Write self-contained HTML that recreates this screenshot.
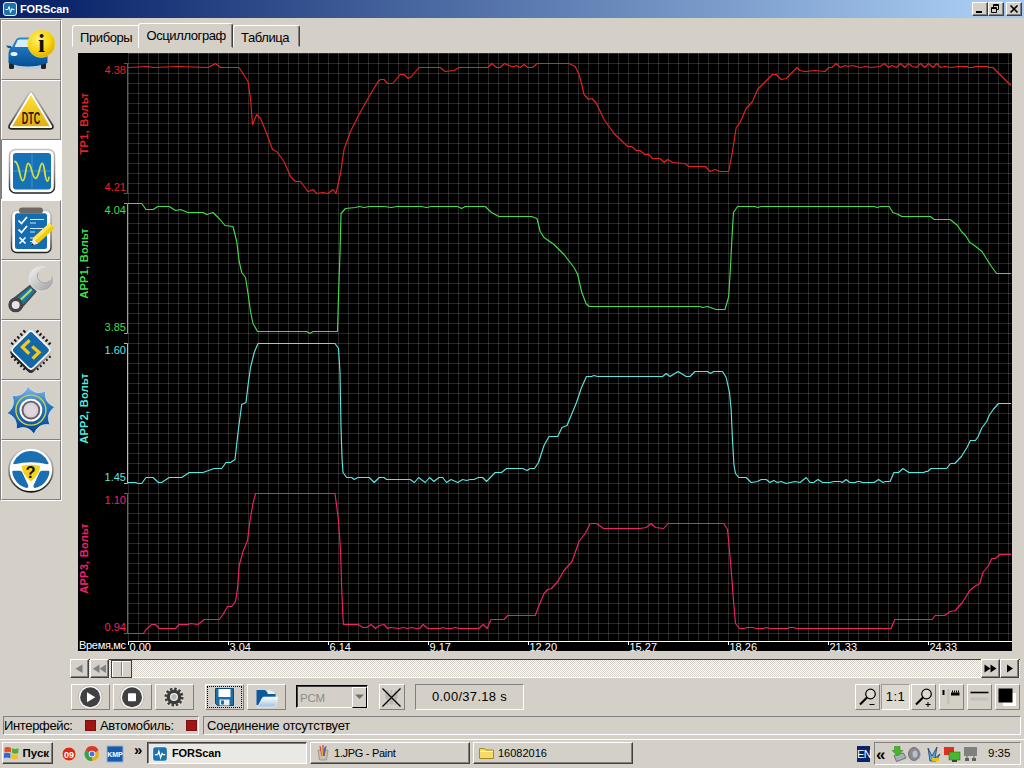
<!DOCTYPE html>
<html><head><meta charset="utf-8"><title>FORScan</title><style>
*{box-sizing:border-box;margin:0;padding:0}
html,body{width:1024px;height:768px;overflow:hidden;background:#d4d0c8;font-family:"Liberation Sans","DejaVu Sans",sans-serif;font-size:11px;color:#000}
.abs{position:absolute}
#title{left:0;top:0;width:1024px;height:18px;background:linear-gradient(90deg,#0a246a 0%,#0a246a 5%,#a6caf0 95%,#a6caf0 100%)}
#title .t{position:absolute;left:20px;top:2px;color:#fff;font-weight:bold;font-size:11px;line-height:14px;letter-spacing:-0.1px}
.wb{position:absolute;top:2px;width:16px;height:14px;background:#d4d0c8;border:1px solid;border-color:#fff #404040 #404040 #fff;box-shadow:inset -1px -1px 0 #808080}
.raised{background:#d4d0c8;border:1px solid;border-color:#fff #808080 #808080 #fff}
.sunken{border:1px solid;border-color:#808080 #fff #fff #808080}
.sb{position:absolute;left:1px;width:60px;height:60px;border:1px solid;border-color:#fff #808080 #808080 #fff;background:#d4d0c8}
.sb.sel{background:#fff;border-color:#fff}
.sb svg{position:absolute;left:0;top:0}
.tab{position:absolute;font-size:13px;letter-spacing:-0.4px;line-height:16px;white-space:nowrap;border:1px solid;border-color:#fff #404040 transparent #fff;border-radius:3px 3px 0 0;box-shadow:inset -1px 0 0 #808080}
#chart{left:78px;top:53px;width:934px;height:598px;background:#000;overflow:hidden}
#grid{position:absolute;left:50px;top:0;width:884px;height:589px;
 background-image:linear-gradient(90deg,transparent 0,transparent 9px,rgba(255,255,255,0.155) 9px,rgba(255,255,255,0.155) 10px),linear-gradient(180deg,transparent 0,transparent 9px,rgba(255,255,255,0.155) 9px,rgba(255,255,255,0.155) 10px);
 background-size:10px 10px,10px 10px;background-position:1px 0,0 1px}
.tb{position:absolute;top:684px;height:26px}
.tk{position:absolute;top:742px;height:22px;font-size:11px;line-height:20px;white-space:nowrap}
</style></head><body>
<div id="title" class="abs"><div class="t">FORScan</div></div>
<svg class="abs" style="left:3px;top:2px" width="14" height="14" viewBox="0 0 14 14"><rect x="0.500" y="0.500" width="13" height="13" rx="2.500" fill="#1d72ac" stroke="#e8f0f8" stroke-width="1"/><path d="M2.500,7.500H5L6,4.500L7.500,10.500L8.800,6.500L9.500,7.500H11.500" fill="none" stroke="#fff" stroke-width="1"/></svg>
<div class="wb" style="left:972px"><div class="abs" style="left:3px;top:8px;width:6px;height:2px;background:#000"></div></div>
<div class="wb" style="left:988px"><svg class="abs" style="left:0;top:0" width="14" height="12"><path d="M4.500,1.500H9.500V6.500H4.500Z M4.500,2.500H9.500" fill="none" stroke="#000" stroke-width="1"/><rect x="2" y="4" width="6" height="6" fill="#d4d0c8"/><path d="M2.500,4.500H7.500V9.500H2.500Z M2.500,5.500H7.500" fill="none" stroke="#000" stroke-width="1"/></svg></div>
<div class="wb" style="left:1006px"><svg class="abs" style="left:0;top:0" width="14" height="12"><path d="M3.500,2.500L10.500,9.500M10.500,2.500L3.500,9.500" stroke="#000" stroke-width="1.700"/></svg></div>

<svg width="0" height="0" style="position:absolute"><defs>
<linearGradient id="gBlue" x1="0" y1="0" x2="0" y2="1"><stop offset="0" stop-color="#2a8ad2"/><stop offset="1" stop-color="#054e94"/></linearGradient>
<radialGradient id="gYel" cx="0.4" cy="0.35" r="0.7"><stop offset="0" stop-color="#fff27a"/><stop offset="0.6" stop-color="#f6d40e"/><stop offset="1" stop-color="#d8a800"/></radialGradient>
<linearGradient id="gYel2" x1="0" y1="0" x2="0" y2="1"><stop offset="0" stop-color="#ffe23a"/><stop offset="1" stop-color="#e0b010"/></linearGradient>
<linearGradient id="gSil" x1="0" y1="0" x2="1" y2="1"><stop offset="0" stop-color="#f4f4f4"/><stop offset="1" stop-color="#9a9a9a"/></linearGradient>
<linearGradient id="gGear" x1="0" y1="0" x2="0" y2="1"><stop offset="0" stop-color="#8ab8e8"/><stop offset="0.4" stop-color="#2a78bc"/><stop offset="1" stop-color="#06408c"/></linearGradient>
<linearGradient id="gFrame" x1="0" y1="0" x2="0" y2="1"><stop offset="0" stop-color="#c4c4c4"/><stop offset="0.6" stop-color="#808080"/><stop offset="1" stop-color="#202020"/></linearGradient>
<linearGradient id="gFrame2" x1="0" y1="0" x2="0" y2="1"><stop offset="0" stop-color="#d0d0d0"/><stop offset="0.5" stop-color="#909090"/><stop offset="1" stop-color="#101010"/></linearGradient>
</defs></svg>
<div class="abs" style="left:0;top:19px;width:62px;height:482px;border:1px solid;border-color:#808080 #fff #fff #808080"></div>
<!-- 1 car info -->
<div class="sb" style="top:20px"><svg width="58" height="58" viewBox="0 1 58 58">
<ellipse cx="25" cy="47" rx="19" ry="2.5" fill="#b8c8d8" opacity="0.7"/>
<rect x="7" y="42" width="5" height="7" rx="1.5" fill="#222"/><rect x="39" y="42" width="5" height="7" rx="1.5" fill="#222"/>
<path d="M6.500,43 V34 Q6.500,29 10,27 L14,19.500 Q15,17.500 18,17.500 H33 Q36,17.500 37,19.500 L41,27 Q45.500,29 45.500,34 V43 Q36,46.500 26,46.500 Q16,46.500 6.500,43Z" fill="url(#gBlue)"/>
<path d="M12.5,27 L15.5,20.5 Q16,19.5 18,19.5 H33 Q35,19.500 35.500,20.5 L38.5,27Z" fill="#d8ecfa"/>
<path d="M4,25.500 l5,0.500 l1,2.500 l-4,-0.500z" fill="#0d5a9a"/>
<ellipse cx="12" cy="34" rx="3.500" ry="2" fill="#e8f4ff"/>
<circle cx="39.4" cy="23.8" r="13.7" fill="url(#gYel)" stroke="#f4e060" stroke-width="0.6"/>
<text x="39.6" y="31.5" font-family="Liberation Serif, DejaVu Serif, serif" font-weight="bold" font-size="25" text-anchor="middle" fill="#111">i</text>
</svg></div>
<!-- 2 DTC -->
<div class="sb" style="top:80px"><svg width="58" height="58" viewBox="0 1 58 58">
<path d="M27.2,13 Q29,10.400 30.800,13 L50.600,45.200 Q52,48.800 48.500,48.800 H9.500 Q6,48.800 7.400,45.200Z" fill="#fff" stroke="url(#gFrame)" stroke-width="1.800" stroke-linejoin="round"/>
<path d="M29,15 L47.800,46.200 H10.200Z" fill="url(#gYel2)"/>
<text x="29" y="43.800" font-family="Liberation Sans, sans-serif" font-weight="bold" font-size="16.500" text-anchor="middle" fill="#2c2008" textLength="18.500" lengthAdjust="spacingAndGlyphs">DTC</text>
</svg></div>
<!-- 3 oscilloscope (selected) -->
<div class="sb sel" style="top:140px"><svg width="58" height="58" viewBox="0 1 58 58">
<rect x="7.500" y="9.500" width="45" height="43.500" rx="6" fill="#fff" stroke="url(#gFrame)" stroke-width="1.5"/>
<rect x="11" y="13" width="38" height="36.500" rx="3" fill="#1672b6"/>
<path d="M30,13V49.500M11,31H49" stroke="#4a9acc" stroke-width="0.8"/>
<path d="M12.9,21.5 C17.5,21.5 17.5,40.6 20.7,40.6 C24,40.6 23.5,23.4 26.2,23.4 C29.5,23.4 30,38.3 33.6,38.3 C37.2,38.3 37.5,23.4 40.2,23.4 C43,23.4 42.5,41 45.3,41 C46.3,41 46.7,39 46.9,37.5" fill="none" stroke="#d8e040" stroke-width="1.8" stroke-linecap="round"/>
</svg></div>
<!-- 4 clipboard -->
<div class="sb" style="top:200px"><svg width="58" height="58" viewBox="0 1 58 58">
<rect x="9.5" y="10.5" width="39.5" height="42" rx="5" fill="#fff" stroke="url(#gFrame)" stroke-width="1.5"/>
<rect x="13" y="13.3" width="32" height="35.6" rx="2.5" fill="#166cb0"/>
<rect x="17" y="7.4" width="24" height="6" rx="3" fill="#6e6862"/>
<path d="M16.5,20.5 l3,3 l5.500,-6.500 M16.5,29.500 l3,3 l5.500,-6.500 M17.500,37.500 l6,6 M23.500,37.500 l-6,6" fill="none" stroke="#fff" stroke-width="1.700"/>
<path d="M28,19.500H42M28,23H34M28,28.500H41M28,32H33M28,38H33M28,41.500H31" stroke="#d0e8f8" stroke-width="1"/>
<g transform="translate(-1.500,-2.500)">
<path d="M49,25.500 L54,31 L37.500,46 L32.500,40.500Z" fill="#f4cc0c"/>
<path d="M49,25.500 L51.300,28 L34.800,43 L32.500,40.500Z" fill="#ffe858"/>
<path d="M32.500,40.500 L37.500,46 L30.500,48.500Z" fill="#f4e8e4"/><path d="M31.500,45.500 L33.500,47.400 L30.500,48.500Z" fill="#111"/>
</g>
</svg></div>
<!-- 5 wrench -->
<div class="sb" style="top:260px"><svg width="58" height="58" viewBox="0 1 58 58">
<path d="M9.6,40.5 L28.3,25.7 L33.7,31.5 L17.8,49.3Z" fill="#1878b0" stroke="#454a4c" stroke-width="1.8" stroke-linejoin="round"/>
<path d="M18.7,39.8 L29.7,29.3" stroke="#c4e044" stroke-width="2"/>
<circle cx="13.7" cy="44.9" r="5.7" fill="#ece0e2" stroke="#454545" stroke-width="3.4"/>
<circle cx="39.5" cy="18.8" r="12.4" fill="url(#gSil)" stroke="#e4e4e4" stroke-width="0.8"/>
<path d="M42.6,15.8 L53.6,4.8" stroke="#d4d0c8" stroke-width="10.5"/>
<circle cx="42.6" cy="15.8" r="7.2" fill="#d4d0c8"/>
<path d="M36.2,12.6 A7.2,7.2 0 0 0 47.5,21" fill="none" stroke="#a4a4a4" stroke-width="1"/>
</svg></div>
<!-- 6 chip -->
<div class="sb" style="top:320px"><svg width="58" height="58" viewBox="0 1 58 58">
<g transform="translate(28.9,30.1) rotate(45)">
<g stroke="#111" stroke-width="3" stroke-dasharray="1.8 2.5">
<path d="M-9.5,-17.8H9.6"/><path d="M-9.5,17.8H9.6"/><path d="M-17.8,-9.5V9.6"/><path d="M17.8,-9.5V9.6"/></g>
</g>
<g transform="translate(28.9,32.4) rotate(45)"><rect x="-15.6" y="-15.6" width="31.2" height="31.2" rx="4" fill="url(#gFrame)"/></g>
<g transform="translate(28.9,30.1) rotate(45)">
<rect x="-15" y="-15" width="30" height="30" rx="4" fill="#fff"/>
<rect x="-13.5" y="-13.5" width="27" height="27" rx="3" fill="#1468a8"/>
</g>
<path d="M27.6,20.3 L20.4,27.1 L27.2,33.8" fill="none" stroke="#f4c81c" stroke-width="3.3"/>
<path d="M30.2,26.6 L37,32.3 L30.6,38.7" fill="none" stroke="#f4c81c" stroke-width="3.3"/>
</svg></div>
<!-- 7 gear -->
<div class="sb" style="top:380px"><svg width="58" height="58" viewBox="0 1 58 58">
<g transform="translate(28.9,30.1)">
<path d="M-3.1,-23.8Q3.8,-14.3 14.6,-19.0Q12.8,-7.4 23.8,-3.1Q14.3,3.8 19.0,14.6Q7.4,12.8 3.1,23.8Q-3.8,14.3 -14.6,19.0Q-12.8,7.4 -23.8,3.1Q-14.3,-3.8 -19.0,-14.6Q-7.4,-12.8 -3.1,-23.8Z" fill="url(#gGear)" stroke="#cfe0f4" stroke-width="0.8" stroke-linejoin="round"/>
<circle r="15" fill="none" stroke="#c8d444" stroke-width="1.4"/>
<circle r="10.6" fill="#e8e8f0" stroke="#fff" stroke-width="1.6"/>
<circle r="8.4" fill="#d8d0d4" stroke="#6a5c64" stroke-width="1.8"/>
<circle r="5.4" fill="#e0d8e0"/>
</g></svg></div>
<!-- 8 steering wheel help -->
<div class="sb" style="top:440px"><svg width="58" height="58" viewBox="0 1 58 58">
<g transform="translate(28.9,29.9)">
<circle r="22" fill="#fff" stroke="url(#gFrame2)" stroke-width="1.6"/>
<path d="M-17.6,-7 A19,19 0 0 1 17.6,-7 Q17.8,-5.6 16.4,-5.6 Q0,-9.5 -16.4,-5.6 Q-17.8,-5.6 -17.6,-7Z" fill="#1a6eb2"/>
<path d="M-18.6,2.2 Q-18.8,0.8 -17,0.8 L-11,0.8 Q-9.3,0.8 -8.6,2.5 L-2.6,15.5 Q-2,17.5 -4,18.2 A19,19 0 0 1 -18.6,2.2Z" fill="#1a6eb2"/>
<path d="M18.6,2.2 Q18.8,0.8 17,0.8 L11,0.8 Q9.3,0.8 8.6,2.5 L2.6,15.5 Q2,17.5 4,18.2 A19,19 0 0 0 18.6,2.2Z" fill="#1a6eb2"/>
<path d="M-9.4,-4 Q0,-7 9.4,-4 Q8.5,5 0,11.5 Q-8.5,5 -9.4,-4Z" fill="#f4d414"/>
<text x="-0.3" y="8.4" font-family="Liberation Sans, sans-serif" font-weight="bold" font-size="16.5" text-anchor="middle" fill="#111">?</text>
</g></svg></div>
<div class="abs" style="left:0;top:140px;width:2px;height:59px;background:#808080"></div>

<div class="tab" style="left:72px;top:25px;width:68px;height:22px;padding:4px 0 0 7px;border-right-color:transparent;box-shadow:none">Приборы</div>
<div class="tab" style="left:233px;top:25px;width:67px;height:22px;padding:4px 0 0 7px">Таблица</div>
<div class="tab" style="left:138px;top:23px;width:95px;height:25px;padding:4px 0 0 7.5px;background:#d4d0c8">Осциллограф</div>

<div id="chart" class="abs"><div id="grid"></div><svg class="abs" style="left:0;top:0" width="934" height="598" viewBox="0 0 934 598" font-family="Liberation Sans, DejaVu Sans, sans-serif" font-size="11"><path d="M46,10.5H49.5V140.5H46" fill="none" stroke="#e62222" stroke-width="1"/><text x="48" y="21" text-anchor="end" fill="#e62222">4.38</text><text x="48" y="138" text-anchor="end" fill="#e62222">4.21</text><text transform="translate(10,70.5) rotate(-90)" text-anchor="middle" font-weight="bold" letter-spacing="0.3" fill="#e62222">TP1, Вольт</text><path d="M46,150.5H49.5V280.5H46" fill="none" stroke="#44dc4e" stroke-width="1"/><text x="48" y="161" text-anchor="end" fill="#44dc4e">4.04</text><text x="48" y="278" text-anchor="end" fill="#44dc4e">3.85</text><text transform="translate(10,210.5) rotate(-90)" text-anchor="middle" font-weight="bold" letter-spacing="0.3" fill="#44dc4e">APP1, Вольт</text><path d="M46,290.5H49.5V430.5H46" fill="none" stroke="#5ce6de" stroke-width="1"/><text x="48" y="301" text-anchor="end" fill="#5ce6de">1.60</text><text x="48" y="428" text-anchor="end" fill="#5ce6de">1.45</text><text transform="translate(10,355.5) rotate(-90)" text-anchor="middle" font-weight="bold" letter-spacing="0.3" fill="#5ce6de">APP2, Вольт</text><path d="M46,440.5H49.5V580.5H46" fill="none" stroke="#f0206e" stroke-width="1"/><text x="48" y="451" text-anchor="end" fill="#f0206e">1.10</text><text x="48" y="578" text-anchor="end" fill="#f0206e">0.94</text><text transform="translate(10,505.5) rotate(-90)" text-anchor="middle" font-weight="bold" letter-spacing="0.3" fill="#f0206e">APP3, Вольт</text><polyline fill="none" stroke="#e62222" stroke-width="1.15" stroke-linejoin="round" points="50,14.5 70,13.5 75,14.5 100,13.5 130,14.5 137.5,10.5 142.5,14.5 161,14.5 170,28.5 172.5,45.5 174.5,71.5 178.7,61.5 182.5,65.5 188.7,80.5 194.5,96.5 198.7,98.5 206,108.5 212.5,123.5 217.5,128.5 222.5,128.5 230,138.5 235,136.5 238.7,140.5 245,139.5 250,140.5 255,136.5 258,140.5 262.5,120.5 266,96.5 272.5,78.5 280,63.5 290,45.5 300,28.5 302.5,26.5 306,26.5 309.7,30.5 314.7,30.5 322.2,21.5 326,21.5 330.2,25.5 333.5,23.5 341,14.5 343.5,14.5 362.2,14.5 367.2,18.5 376,17.5 381,14.5 409.7,14.5 414,10.5 418.5,14.5 422.2,14.5 426.5,10.5 433.5,13.5 436,13.5 438,12.5 442.2,14.5 446,11.5 449.7,14.5 454.7,14.5 459,10.5 491,10.5 497.2,13.5 501,21.5 503.5,30.5 506,41.5 510.5,46.5 514,45.5 518.5,50.5 526,66.5 536,80.5 549.7,93.5 553.5,93.5 558.5,97.5 562,97.5 567,101.5 570.7,101.5 574.5,105.5 582,105.5 586.2,109.5 589.5,106.5 594.5,109.5 607,110.5 610.7,113.5 627.5,113.5 632,118.5 637,116.5 642,118.5 650.7,118.5 654.5,98.5 658.2,74.5 662,69.5 668.2,55.5 674.5,48.5 679.5,36.5 684.5,31.5 694.5,21.5 698.2,21.5 703.2,26.5 708.2,25.5 719,14.5 722,17.5 727,18.5 737,17.5 747,18.5 750.7,14.5 754,14.5 758.1,10.5 762.4,14.5 767.1,12.5 770,13.5 774.6,12.5 782.1,14.5 787.7,13.5 793.4,14.5 801.8,13.5 806.5,10.5 810.6,14.5 814,12.5 818.7,14.5 822.4,10.5 826.7,14.5 830.5,10.5 834.2,13.5 838.4,14.5 842.5,10.5 846.8,14.5 850.6,10.5 854.9,14.5 858.6,10.5 862.7,14.5 866.5,13.5 874,14.5 879.6,13.5 883.4,13.5 889,13.5 890.2,14.5 895.5,14.5 896.7,13.5 909.5,13.5 910.7,14.5 914.8,14.5 933,32.5"/><polyline fill="none" stroke="#44dc4e" stroke-width="1.15" stroke-linejoin="round" points="50,150.5 63.7,150.5 68,156.5 75,156.5 80,153.5 91.2,153.5 97.5,157.5 102.5,156.5 110,159.5 125,159.5 128.7,161.5 135,159.5 141.2,165.5 147,172.5 155,173.5 158.7,188.5 161.2,208.5 163.7,219.5 167.5,224.5 170,240.5 172.5,258.5 175,270.5 179.5,278.5 228.7,278.5 232,280.5 235,278.5 259.5,278.5 260.5,243.5 262,200.5 263,160.5 267.5,155.5 277.5,154.5 281.2,153.5 286.2,154.5 291.2,153.5 306,153.5 313.5,154.5 318.5,153.5 343.5,153.5 348.5,154.5 353.5,153.5 379.7,153.5 383.5,155.5 387.2,153.5 407.2,153.5 413.5,159.5 421,163.5 453.5,163.5 459,165.5 462.2,178.5 466,184.5 476,191.5 486,201.5 496,214.5 499.7,221.5 503.5,238.5 508,250.5 511,253.5 562,253.5 622,253.5 624.5,254.5 629.5,253.5 638.2,256.5 647,256.5 650.7,243.5 652.5,213.5 654,183.5 655.5,159.5 659.5,153.5 677,153.5 679.5,154.5 683.2,153.5 796.2,153.5 799,154.5 802.7,153.5 811.2,153.5 814.9,159.5 820.6,161.5 823.7,163.5 852.4,163.5 856.2,166.5 872.1,166.5 879.6,172.5 883.4,178.5 887.5,182.5 891.8,189.5 896.5,192.5 904,198.5 907.7,204.5 913.4,213.5 918.6,220.5 933,220.5"/><polyline fill="none" stroke="#5ce6de" stroke-width="1.15" stroke-linejoin="round" points="50,429.5 57.5,429.5 60,430.5 63.7,430.5 68,424.5 75,424.5 80.5,429.5 83.7,429.5 91.2,424.5 103.7,424.5 111.2,419.5 125,419.5 136.2,415.5 143.7,415.5 148,409.5 152.5,409.5 157,406.5 160,379.5 163.7,351.5 168,349.5 170,332.5 172.5,314.5 176.2,299.5 180,290.5 257,290.5 260.5,295.5 262,319.5 263,374.5 264,404.5 265,419.5 268.7,424.5 273.7,424.5 276.2,426.5 280,424.5 291.2,424.5 296.2,429.5 301.2,424.5 306,424.5 308.5,426.5 332.2,426.5 336.5,429.5 340.5,424.5 347.2,429.5 351.5,424.5 356,428.5 361,424.5 364.7,424.5 368.5,429.5 373,426.5 379.7,429.5 384.7,426.5 388.5,427.5 392.2,426.5 396,426.5 400.5,424.5 404.7,424.5 408.5,428.5 417.2,419.5 423.5,419.5 428.5,415.5 444.7,415.5 449,417.5 452.2,415.5 456.5,415.5 460.5,409.5 466,392.5 471,383.5 479.7,383.5 484,374.5 489,372.5 498.5,349.5 503.5,334.5 508.5,323.5 513.5,323.5 516,322.5 519.7,323.5 562,323.5 584.5,323.5 588.2,320.5 592,323.5 600,318.5 608.2,323.5 612,323.5 617,318.5 629.5,318.5 632.5,320.5 635.7,318.5 644.5,318.5 648.2,324.5 651.5,339.5 653.2,357.5 654.5,387.5 656,412.5 657.5,420.5 660.7,424.5 668.2,424.5 673.2,429.5 679.5,428.5 683.2,426.5 688.2,426.5 692,429.5 695.7,427.5 699.5,429.5 703.2,428.5 708.2,430.5 717,428.5 722,429.5 728.2,424.5 732,429.5 735.7,429.5 740,426.5 744.5,429.5 752,429.5 755.7,428.5 762.4,428.5 764.3,429.5 768.1,426.5 771.8,429.5 777.4,429.5 779.3,428.5 782.1,428.5 784,429.5 796.2,429.5 800.5,426.5 805,429.5 807.4,428.5 812.1,428.5 815.9,419.5 820.6,419.5 824.9,415.5 830.9,419.5 832.7,419.5 845.9,419.5 847.7,418.5 849.6,418.5 853,415.5 868.7,415.5 872.5,410.5 876.8,410.5 883.4,403.5 889,394.5 892.4,387.5 897.4,387.5 900.2,383.5 904,374.5 908.7,368.5 911.1,362.5 915.2,356.5 920.5,350.5 933,350.5"/><polyline fill="none" stroke="#f0206e" stroke-width="1.15" stroke-linejoin="round" points="50,580.5 65.5,580.5 68,576.5 73.7,571.5 77.5,571.5 81.2,575.5 97.5,575.5 101.2,571.5 110,571.5 112.5,570.5 120,571.5 126.2,566.5 141.2,566.5 145,561.5 149.5,553.5 153.7,553.5 157.5,548.5 159.5,535.5 161.2,512.5 165,498.5 169.5,487.5 172,467.5 175,450.5 177.5,440.5 257,440.5 260.5,467.5 262.5,497.5 263.7,535.5 265,565.5 265.5,571.5 280,571.5 285,574.5 288.7,574.5 293,571.5 297.5,575.5 301.2,572.5 306,571.5 309.7,575.5 312.2,574.5 321,575.5 324.7,574.5 329.7,575.5 333.5,574.5 338.5,575.5 341.5,575.5 345.2,571.5 349.7,575.5 362.2,575.5 364.7,574.5 368.5,575.5 373.5,575.5 377.2,574.5 381,575.5 401,575.5 405.2,571.5 409.2,575.5 413,566.5 426,566.5 429.7,562.5 457.2,562.5 461,552.5 466,540.5 469.7,536.5 473.5,535.5 479.7,528.5 486,517.5 494,508.5 501,488.5 507.2,480.5 512.2,470.5 518.5,470.5 525.5,475.5 562,475.5 568.2,474.5 573.2,470.5 577.5,474.5 585.7,475.5 590,470.5 645.7,470.5 649.5,476.5 651.5,497.5 654,527.5 655.7,550.5 657.5,570.5 661.5,575.5 665.7,575.5 669.5,574.5 674.5,574.5 678.2,575.5 685.7,575.5 688.2,574.5 692,575.5 709.5,575.5 712,574.5 715.7,574.5 718.2,575.5 813.1,575.5 816.8,566.5 854.3,566.5 857.1,562.5 866.5,562.5 872.1,558.5 877.4,557.5 884.3,549.5 891.8,537.5 896.5,533.5 901.8,530.5 904.9,519.5 910.6,512.5 913.8,505.5 917.5,505.5 921.8,501.5 933,501.5"/><path d="M50.5,592V588.5H934M150.5,588.5V592M250.5,588.5V592M350.5,588.5V592M450.5,588.5V592M550.5,588.5V592M650.5,588.5V592M750.5,588.5V592M850.5,588.5V592" fill="none" stroke="#fff" stroke-width="1"/><text x="51.5" y="598" fill="#fff">0.00</text><text x="151.5" y="598" fill="#fff">3.04</text><text x="251.5" y="598" fill="#fff">6.14</text><text x="351.5" y="598" fill="#fff">9.17</text><text x="451.5" y="598" fill="#fff">12.20</text><text x="551.5" y="598" fill="#fff">15.27</text><text x="651.5" y="598" fill="#fff">18.26</text><text x="751.5" y="598" fill="#fff">21.33</text><text x="851.5" y="598" fill="#fff">24.33</text><text x="1" y="596" fill="#fff" letter-spacing="-0.3">Время,мс</text></svg></div>
<div class="abs" style="left:71px;top:659px;width:949px;height:19px;background-color:#fff;background-image:linear-gradient(45deg,#d4d0c8 25%,transparent 25%,transparent 75%,#d4d0c8 75%),linear-gradient(45deg,#d4d0c8 25%,transparent 25%,transparent 75%,#d4d0c8 75%);background-size:2px 2px;background-position:0 0,1px 1px;border-top:1px solid #404040;border-bottom:1px solid #fff"></div>
<div class="abs raised" style="left:70px;top:659px;width:19px;height:19px;border-color:#fff #404040 #404040 #fff;box-shadow:inset -1px -1px 0 #808080"><svg width="17" height="17" class="abs" style="left:0;top:0"><path d="M11.5,4.500V13L4.500,8.750Z" fill="#808080"/></svg></div>
<div class="abs raised" style="left:90px;top:659px;width:19px;height:19px;border-color:#fff #404040 #404040 #fff;box-shadow:inset -1px -1px 0 #808080"><svg width="17" height="17" class="abs" style="left:0;top:0"><path d="M8.500,4.500V13L2,8.750Z M15,4.500V13L8.500,8.750Z" fill="#808080"/></svg></div>
<div class="abs" style="left:111px;top:660px;width:21px;height:18px;background:#d4d0c8;border:1px solid #404040;box-shadow:inset 1px 1px 0 #fff"><div class="abs" style="left:9px;top:1px;width:2px;height:14px;border-left:1px solid #808080;border-right:1px solid #fff"></div></div>
<div class="abs raised" style="left:981px;top:659px;width:19px;height:19px;border-color:#fff #404040 #404040 #fff;box-shadow:inset -1px -1px 0 #808080"><svg width="17" height="17" class="abs" style="left:0;top:0"><path d="M2.500,4.500V12.500L8.500,8.500Z M8.500,4.500V12.500L14.500,8.500Z" fill="#000"/></svg></div>
<div class="abs raised" style="left:1000px;top:659px;width:19px;height:19px;border-color:#fff #404040 #404040 #fff;box-shadow:inset -1px -1px 0 #808080"><svg width="17" height="17" class="abs" style="left:0;top:0"><path d="M6,4.500V12.500L12,8.500Z" fill="#000"/></svg></div>

<div class="tb raised" style="left:71px;width:39px"><svg width="37" height="24" class="abs" style="left:0;top:0"><circle cx="18.2" cy="12.2" r="12" fill="#f4f4f2" stroke="#a8a49c" stroke-width="0.7"/><circle cx="18.2" cy="12.2" r="10" fill="#404040"/><path d="M15,7.200V17.200L23.300,12.200Z" fill="#fff"/></svg></div>
<div class="tb raised" style="left:113px;width:39px"><svg width="37" height="24" class="abs" style="left:0;top:0"><circle cx="18" cy="12.2" r="12" fill="#f4f4f2" stroke="#a8a49c" stroke-width="0.7"/><circle cx="18" cy="12.2" r="10" fill="#404040"/><rect x="14" y="8.200" width="8" height="8" rx="0.800" fill="#fff"/></svg></div>
<div class="tb raised" style="left:155px;width:39px"><svg width="37" height="24" class="abs" style="left:0;top:0"><g transform="translate(18,12)"><circle r="10.500" fill="#dcd9d2"/><circle r="8.200" fill="none" stroke="#3a3a3a" stroke-width="2.600" stroke-dasharray="2.400 1.893"/><circle r="7.300" fill="#3a3a3a"/><circle r="3.400" fill="#b8b8b8" stroke="#e8e8e8" stroke-width="1.300"/></g></svg></div>
<div class="tb raised" style="left:205px;width:39px"><div class="abs" style="left:1px;top:1px;width:35px;height:22px;border:1px dotted #000"></div><svg width="37" height="24" class="abs" style="left:0;top:0"><path d="M9.500,3.500H27.500V20.500H11.500L9.500,18.500Z" fill="#1b6ea6" stroke="#0c4a80" stroke-width="1"/><rect x="12.500" y="4" width="12" height="8" fill="#fff"/><rect x="13.500" y="14.500" width="10" height="6" fill="#e8eef4"/><rect x="15" y="15.500" width="3" height="4" fill="#1b6ea6"/></svg></div>
<div class="tb raised" style="left:247px;width:39px"><svg width="37" height="24" class="abs" style="left:0;top:0"><defs><linearGradient id="gFl" x1="0" y1="0" x2="0" y2="1"><stop offset="0" stop-color="#fff"/><stop offset="1" stop-color="#9cc0e4"/></linearGradient></defs><path d="M8.500,5H17L19.500,7.500H27.500V20H8.500Z" fill="#0c5a9c"/><path d="M19.500,4.500L27.500,7.500V9H19.500Z" fill="#e8f0f8"/><path d="M14,13.500Q14.500,12 16,12H30L27.500,20.500Q27,22 25.500,22H9.500Z" fill="url(#gFl)" stroke="#f4f8fc" stroke-width="0.600"/></svg></div>
<div class="abs" style="left:296px;top:685px;width:72px;height:23px;border:1px solid;border-color:#000 #fff #fff #000;box-shadow:inset 1px 1px 0 #404040;background:#d4d0c8"><div class="abs" style="left:3px;top:4.5px;font-size:11.5px;line-height:14px;color:#8a8a8a;letter-spacing:-0.2px">PCM</div><div class="abs" style="left:55px;top:1px;width:15px;height:21px;background:#d4d0c8;border:1px solid;border-color:#fff #000 #000 #fff"><svg width="13" height="19" class="abs" style="left:0;top:0"><path d="M2,6.500H11L6.500,11Z" fill="#707070"/></svg></div></div>
<div class="tb raised" style="left:379px;width:26px"><svg width="23" height="24" class="abs" style="left:0;top:0"><path d="M7.500,5V20M11.500,5V20M15.500,5V20" stroke="#bcb8b0" stroke-width="1.600"/><rect x="5.500" y="7" width="4" height="7" rx="1.500" fill="#b8b4ac"/><rect x="9.500" y="13" width="4" height="6" rx="1.500" fill="#b8b4ac"/><rect x="13.500" y="7" width="4" height="7" rx="1.500" fill="#b8b4ac"/><path d="M2.500,3.500L20.500,21.500M20.500,3.500L2.500,21.500" stroke="#000" stroke-width="1.300"/></svg></div>
<div class="abs sunken" style="left:415px;top:684px;width:109px;height:26px;font-size:13px;line-height:24px;text-align:center;letter-spacing:0.300px">0.00/37.18 s</div>
<div class="tb raised" style="left:855px;width:25px"><svg width="23" height="24" class="abs" style="left:0;top:0"><circle cx="14.500" cy="9" r="4.800" fill="#dedad2" stroke="#000" stroke-width="1.200"/><path d="M11,12.500L4,19.500" stroke="#000" stroke-width="2.100"/><path d="M13.500,19.500H18.500" stroke="#000" stroke-width="1"/></svg></div>
<div class="tb" style="left:881px;width:29px;border:1px solid;border-color:#a09c94 #fff #fff #a09c94;background:#dcd9d2;font-size:13px;line-height:24px;text-align:center;letter-spacing:0.500px">1:1</div>
<div class="tb raised" style="left:911px;width:25px"><svg width="23" height="24" class="abs" style="left:0;top:0"><circle cx="14.500" cy="9" r="4.800" fill="#dedad2" stroke="#000" stroke-width="1.200"/><path d="M11,12.500L4,19.500" stroke="#000" stroke-width="2.100"/><path d="M13.500,19.500H18.500M16,17V22" stroke="#000" stroke-width="1"/></svg></div>
<div class="tb raised" style="left:939px;width:25px"><svg width="23" height="24" class="abs" style="left:0;top:0"><rect x="7" y="4" width="2.500" height="15" fill="#c4c0b8"/><rect x="2.500" y="5" width="2" height="5" fill="#000"/><path d="M11,7.500H19.500V10.500H11Z" fill="#000"/><path d="M12.500,5.500V7.500M14.500,5.500V7.500M16.500,5.500V7.500M18.500,5.500V7.500" stroke="#000" stroke-width="1"/></svg></div>
<div class="tb raised" style="left:967px;width:25px"><svg width="23" height="24" class="abs" style="left:0;top:0"><path d="M2.500,7.500H20.500" stroke="#000" stroke-width="1.600"/><path d="M2.500,14H20.500" stroke="#c4c0b8" stroke-width="3"/></svg></div>
<div class="tb raised" style="left:995px;width:25px"><svg width="23" height="24" class="abs" style="left:0;top:0"><rect x="7" y="8" width="13" height="13" fill="#fff"/><rect x="2.500" y="3.500" width="14" height="14" fill="#000"/></svg></div>

<div class="abs sunken" style="left:3px;top:716px;width:196px;height:19px;font-size:13px;line-height:17px;white-space:nowrap">
<span class="abs" style="left:0px;top:0;letter-spacing:-0.35px">Интерфейс:</span><span class="abs" style="left:81px;top:3px;width:11px;height:11px;background:#a01414;border:1px solid #7a1010"></span>
<span class="abs" style="left:96px;top:0;letter-spacing:-0.3px">Автомобиль:</span><span class="abs" style="left:182px;top:3px;width:11px;height:11px;background:#a01414;border:1px solid #7a1010"></span></div>
<div class="abs sunken" style="left:203px;top:716px;width:818px;height:19px;font-size:13px;line-height:17px;white-space:nowrap"><span class="abs" style="left:3px;top:0;letter-spacing:-0.22px">Соединение отсутствует</span></div>

<div class="abs" style="left:0;top:738px;width:1024px;height:30px;background:#d4d0c8;border-top:1px solid #d4d0c8;box-shadow:inset 0 1px 0 #fff"></div>
<div class="tk raised" style="left:2px;width:51px;border-color:#fff #404040 #404040 #fff;box-shadow:inset -1px -1px 0 #808080;font-weight:bold"><svg width="18" height="18" class="abs" style="left:0px;top:1px" viewBox="0.5 1 17 17"><path d="M2,4.500Q4.500,3 8,4.500V9Q4.500,7.500 2,9Z" fill="#e84a20"/><path d="M9,5Q12,6.500 15,5V9.500Q12,11 9,9.500Z" fill="#4ab030"/><path d="M1.500,10Q4,8.500 7.500,10V14.500Q4,13 1.500,14.500Z" fill="#2a6ad8"/><path d="M8.500,10.500Q11.500,12 14.500,10.500V15Q11.500,16.500 8.500,15Z" fill="#f4c020"/></svg><span class="abs" style="left:19.5px;top:0px;font-size:11.5px">Пуск</span></div>
<svg class="abs" style="left:60px;top:744px" width="90" height="20"><circle cx="9" cy="10" r="7" fill="#d82a1a"/><circle cx="9" cy="10" r="7" fill="none" stroke="#f8e8c8" stroke-width="0.800"/><text x="9" y="13.500" font-size="9" font-weight="bold" text-anchor="middle" fill="#fff" font-family="Liberation Sans, sans-serif">09</text>
<circle cx="32" cy="10" r="7" fill="#e8b020"/><path d="M32,10 L25.500,6.500 A7,7 0 0 1 38.500,6.500Z" fill="#d83a2a"/><path d="M32,10 L25.500,6.500 A7,7 0 0 0 32,17Z" fill="#3aa048"/><circle cx="32" cy="10" r="3.300" fill="#fff"/><circle cx="32" cy="10" r="2.500" fill="#3a7ae0"/>
<rect x="47" y="2" width="16" height="16" fill="#1a5aa8" stroke="#8ab4e0" stroke-width="1"/><text x="55" y="13" font-size="7" font-weight="bold" text-anchor="middle" fill="#fff" font-family="Liberation Sans, sans-serif">KMP</text>
<text x="74" y="10.5" font-size="15" font-weight="bold" fill="#000" font-family="Liberation Sans, sans-serif">»</text></svg>
<div class="tk" style="left:147px;width:160px;border:1px solid;border-color:#404040 #fff #fff #404040;box-shadow:inset 1px 1px 0 #808080;background:#ebe9e4;font-weight:bold"><svg class="abs" style="left:4px;top:3px" width="16" height="16" viewBox="0 0 14 14"><rect x="0.500" y="0.500" width="13" height="13" rx="2.500" fill="#1d72ac" stroke="#e8f0f8" stroke-width="1"/><path d="M2.500,7.500H5L6,4.500L7.500,10.500L8.800,6.500L9.500,7.500H11.500" fill="none" stroke="#fff" stroke-width="1"/></svg><span class="abs" style="left:24px;top:0px;font-size:11px;letter-spacing:-0.1px">FORScan</span></div>
<div class="tk raised" style="left:310px;width:160px;border-color:#fff #404040 #404040 #fff;box-shadow:inset -1px -1px 0 #808080"><svg class="abs" style="left:4px;top:1px" width="16" height="18"><path d="M3,6L13,6L11.500,16H4.500Z" fill="#c8c0b0" stroke="#8a7a60" stroke-width="0.600"/><path d="M5,2L7,12M8,1L8,12M11,2L9,12" stroke="#d04040" stroke-width="1.200"/><path d="M6.500,3L7.500,12" stroke="#e8c020" stroke-width="1.200"/><path d="M10,3L8.500,12" stroke="#4060c0" stroke-width="1.200"/></svg><span class="abs" style="left:23px;top:0;letter-spacing:-0.3px">1.JPG - Paint</span></div>
<div class="tk raised" style="left:473px;width:160px;border-color:#fff #404040 #404040 #fff;box-shadow:inset -1px -1px 0 #808080"><svg class="abs" style="left:4px;top:2px" width="18" height="16"><path d="M1.500,3.500H6.500L8,5H15.500V13.500H1.500Z" fill="#f4dc6a" stroke="#a88a20" stroke-width="1"/><path d="M2,6.500H15" stroke="#fff6c0" stroke-width="1"/></svg><span class="abs" style="left:24px;top:0">16082016</span></div>
<div class="abs" style="left:857px;top:746px;width:13px;height:16px;background:#0a246a;color:#fff;font-size:11px;line-height:16px;text-align:center;letter-spacing:-0.500px">EN</div>
<div class="abs sunken" style="left:874px;top:742px;width:147px;height:23px"></div>
<svg class="abs" style="left:876px;top:744px" width="100" height="20"><g transform="translate(-2,0)"><text x="2" y="15.5" font-size="17" font-weight="bold" fill="#000" font-family="Liberation Sans, sans-serif">«</text>
<path d="M20,11.500L29.500,9L32,14L22.500,17.500Z" fill="#a8b0b8" stroke="#58606a" stroke-width="0.800"/><path d="M20.500,2.500L26,2.500L26,6.500L29,6.500L23.500,12L18,6.500L20.500,6.500Z" fill="#48b828" stroke="#2a7a18" stroke-width="0.500"/>
<ellipse cx="40" cy="10" rx="5.500" ry="6.500" fill="#8a8a92" stroke="#606068" stroke-width="0.800"/><ellipse cx="41" cy="10" rx="2.500" ry="3.500" fill="#c0c0c8"/><path d="M45,6Q48,10 45,15" fill="none" stroke="#9a9ad0" stroke-width="0.800"/>
<path d="M54,4L58,12L63,3L61,14L66,10L62,17H56Z" fill="#58a8e0" stroke="#203860" stroke-width="0.800"/><path d="M58,14H65V17H58Z" fill="#e8c020"/>
<rect x="70" y="3" width="10" height="8" fill="#e03020"/><rect x="75" y="8" width="11" height="8" fill="#48b830" stroke="#206010" stroke-width="0.500"/><rect x="78" y="16" width="5" height="2" fill="#404040"/></g>
</svg>
<svg class="abs" style="left:962px;top:744px" width="20" height="20"><rect x="2" y="3" width="13" height="9" fill="#808080"/><rect x="3" y="14" width="4" height="3" fill="#606060"/><rect x="10" y="14" width="4" height="3" fill="#606060"/><path d="M5,12V14M12,12V14" stroke="#606060"/></svg>
<div class="abs" style="left:988px;top:746px;font-size:11.5px;line-height:14px">9:35</div>

</body></html>
